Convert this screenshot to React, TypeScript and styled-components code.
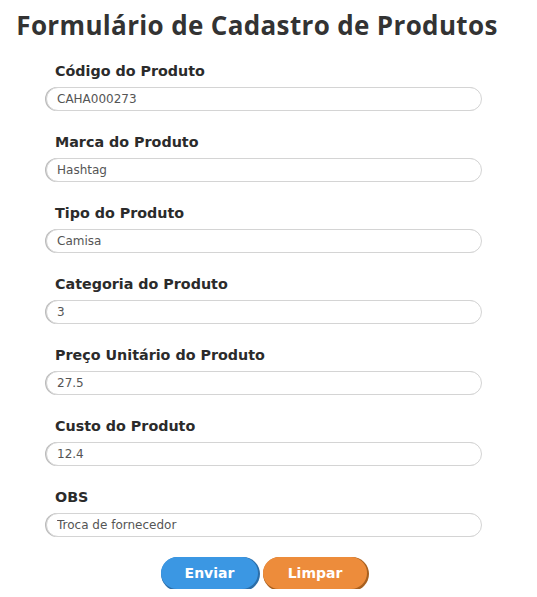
import React from 'react'
import styled, { createGlobalStyle } from 'styled-components'

const GlobalStyle = createGlobalStyle`
    body {
        margin: 0;
        background: #ffffff;
        font-family: 'DejaVu Sans', 'Open Sans', sans-serif;
    }
`

const Page = styled.main`
    width: 528px;
    display: flex;
    flex-direction: column;
    align-items: center;
`

const Title = styled.h1`
    margin: 8px 14px 0 0;
    font-family: 'Open Sans', sans-serif;
    font-size: 26px;
    letter-spacing: 0.35px;
    font-weight: 700;
    color: #333333;
    line-height: 34px;
    white-space: nowrap;
`

const Form = styled.form`
    width: 436px;
    display: flex;
    flex-direction: column;
    margin-top: 19px;
`

const Field = styled.div`
    display: flex;
    flex-direction: column;
    margin-bottom: 21px;
`

const Label = styled.label`
    margin-left: 9px;
    font-size: 14.3px;
    font-weight: 700;
    color: #2b2b2b;
    line-height: 20px;
    margin-bottom: 6px;
`

const Input = styled.input`
    box-sizing: border-box;
    height: 24px;
    width: 100%;
    border: 1px solid #d4d4d4;
    border-radius: 12px;
    box-shadow: -1px 0 0 #bbbbbb;
    padding: 0 10px;
    font-family: inherit;
    font-size: 12px;
    color: #555555;
    background: #ffffff;
    outline: none;
`

const Buttons = styled.div`
    display: flex;
    justify-content: center;
    gap: 5px;
    margin-top: -1px;
`

const Button = styled.button<{ $tone: 'blue' | 'orange' }>`
    height: 32px;
    width: ${(p) => (p.$tone === 'blue' ? '97px' : '104px')};
    padding: 0;
    border: none;
    border-radius: 16px;
    background: ${(p) => (p.$tone === 'blue' ? '#3b97e3' : '#ed8c3b')};
    box-shadow: 1px 1px 0 1px ${(p) => (p.$tone === 'blue' ? '#2c6ea8' : '#a8601f')};
    color: #ffffff;
    font-family: inherit;
    font-size: 14px;
    font-weight: 700;
    cursor: pointer;
`

const fields = [
    { label: 'Código do Produto', value: 'CAHA000273' },
    { label: 'Marca do Produto', value: 'Hashtag' },
    { label: 'Tipo do Produto', value: 'Camisa' },
    { label: 'Categoria do Produto', value: '3' },
    { label: 'Preço Unitário do Produto', value: '27.5' },
    { label: 'Custo do Produto', value: '12.4' },
    { label: 'OBS', value: 'Troca de fornecedor' },
]

export default function App() {
    return (
        <>
            <GlobalStyle />
            <Page>
                <Title>Formulário de Cadastro de Produtos</Title>
                <Form onSubmit={(e) => e.preventDefault()}>
                    {fields.map((f) => (
                        <Field key={f.label}>
                            <Label>{f.label}</Label>
                            <Input defaultValue={f.value} />
                        </Field>
                    ))}
                    <Buttons>
                        <Button $tone="blue" type="submit">
                            Enviar
                        </Button>
                        <Button $tone="orange" type="reset">
                            Limpar
                        </Button>
                    </Buttons>
                </Form>
            </Page>
        </>
    )
}
